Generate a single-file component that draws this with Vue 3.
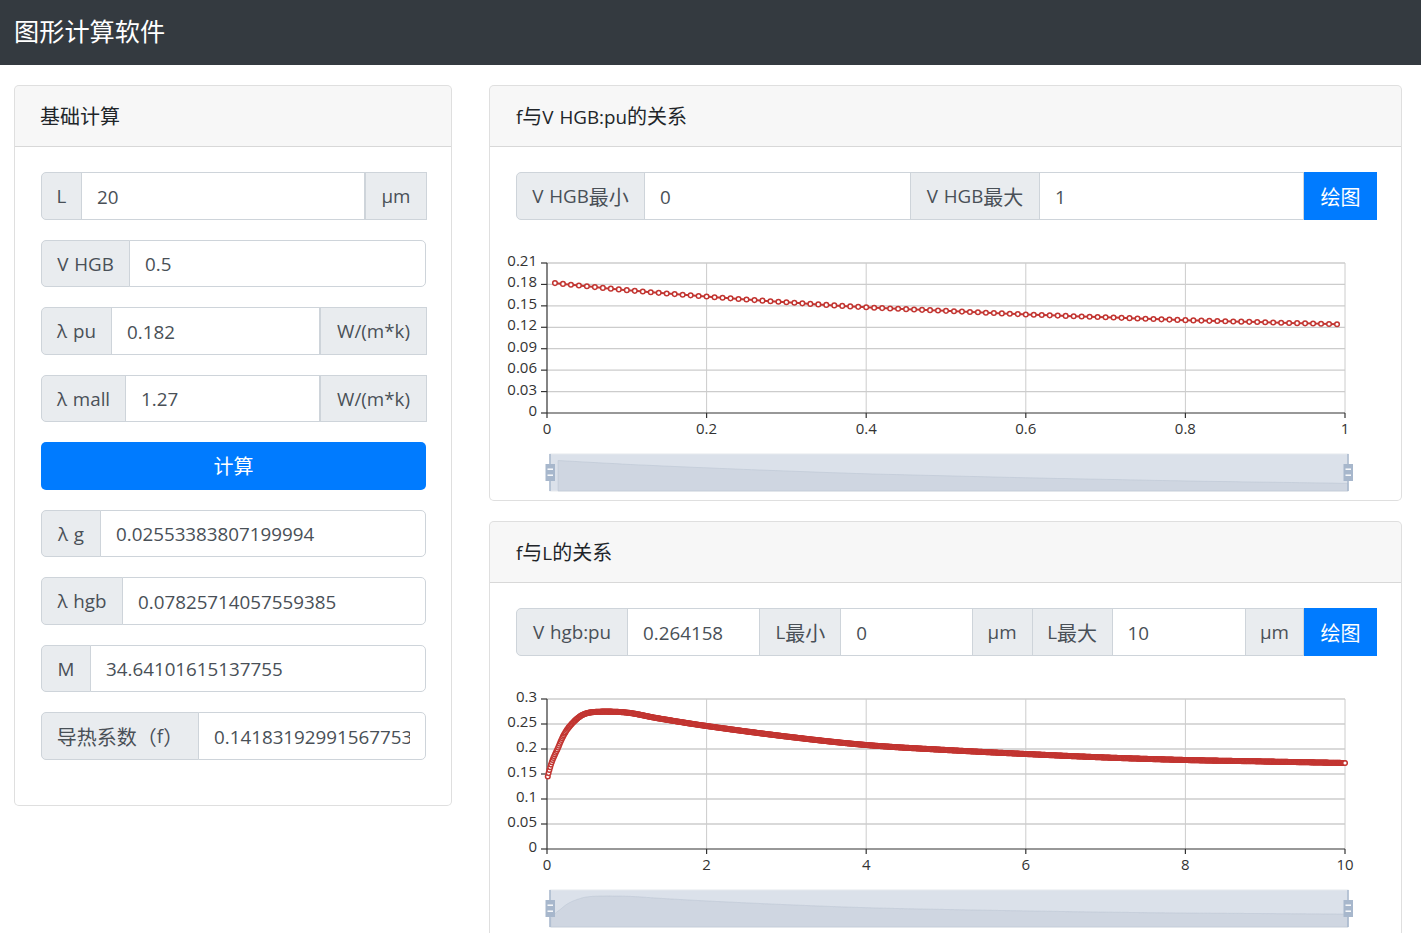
<script setup>
const segs = (t) => t.match(/[\u3000-\u9fff\uff00-\uffef]+|[^\u3000-\u9fff\uff00-\uffef]+/g).map((s) => ({ s, cjk: /[\u3000-\u9fff\uff00-\uffef]/.test(s) }))

const leftRows = [
  { label: 'L', w: 41, value: '20', append: 'µm', aw: 63 },
  { label: 'V HGB', w: 89, value: '0.5' },
  { label: 'λ pu', w: 71, value: '0.182', append: 'W/(m*k)', aw: 108 },
  { label: 'λ mall', w: 85, value: '1.27', append: 'W/(m*k)', aw: 108 },
  { button: '计算' },
  { label: 'λ g', w: 60, value: '0.02553383807199994' },
  { label: 'λ hgb', w: 82, value: '0.07825714057559385' },
  { label: 'M', w: 50, value: '34.64101615137755' },
  { label: '导热系数（f）', w: 158, value: '0.14183192991567753' }
]

const group1 = [
  { label: 'V HGB最小', w: 129 },
  { value: '0', w: 267 },
  { label: 'V HGB最大', w: 130 },
  { value: '1' }
]
const group2 = [
  { label: 'V hgb:pu', w: 112 },
  { value: '0.264158', w: 133.3 },
  { label: 'L最小', w: 82 },
  { value: '0', w: 132.3 },
  { label: 'µm', w: 61 },
  { label: 'L最大', w: 81 },
  { value: '10' },
  { label: 'µm', w: 59 }
]

const interp = (tbl, x) => {
  const n = tbl.length
  const slope = (i) => {
    const a = tbl[Math.max(i - 1, 0)]
    const b = tbl[Math.min(i + 1, n - 1)]
    return (b[1] - a[1]) / (b[0] - a[0])
  }
  for (let i = 1; i < n; i++) {
    if (x <= tbl[i][0]) {
      const h = tbl[i][0] - tbl[i - 1][0]
      const t = (x - tbl[i - 1][0]) / h
      const t2 = t * t
      const t3 = t2 * t
      return (2 * t3 - 3 * t2 + 1) * tbl[i - 1][1] + (t3 - 2 * t2 + t) * h * slope(i - 1) + (-2 * t3 + 3 * t2) * tbl[i][1] + (t3 - t2) * h * slope(i)
    }
  }
  return tbl[n - 1][1]
}

const t1 = [[0, 0.183], [0.1, 0.172], [0.2, 0.163], [0.3, 0.155], [0.4, 0.148], [0.5, 0.143], [0.6, 0.138], [0.7, 0.134], [0.8, 0.13], [0.9, 0.127], [1, 0.124]]
const t2 = [[0, 0.138], [0.03, 0.158], [0.07, 0.178], [0.135, 0.201], [0.2, 0.2247], [0.28, 0.2447], [0.41, 0.2647], [0.53, 0.2727], [0.79, 0.2747], [1.04, 0.272], [1.37, 0.262], [2, 0.246], [3.05, 0.224], [4, 0.208], [5, 0.198], [6, 0.19], [7, 0.183], [8, 0.178], [9, 0.175], [10, 0.172]]

const X0 = 57, X1 = 855, Y0 = 173, Y1 = 23
const ZL = 60, ZR = 858, ZT = 214, ZB = 251

const build = (tbl, xMax, yMax, yLabels, xLabels, step, first, last, sy) => {
  const pts = []
  const n = Math.round((last - first) / step)
  for (let i = 0; i <= n; i++) {
    const v = first + i * step
    const y = interp(tbl, v)
    pts.push({ x: X0 + (v / xMax) * (X1 - X0), y: Y0 - (y / yMax) * (Y0 - Y1), zx: ZL + ((i + 1) / (n + 1)) * (ZR - ZL), zy: sy(y) })
  }
  return {
    pts,
    line: 'M' + pts.map((p) => p.x.toFixed(2) + ' ' + p.y.toFixed(2)).join('L'),
    shadow: 'M' + pts[0].zx.toFixed(1) + ' ' + ZB + 'L' + pts.map((p) => p.zx.toFixed(1) + ' ' + p.zy.toFixed(1)).join('L') + 'L' + pts[pts.length - 1].zx.toFixed(1) + ' ' + ZB + 'Z',
    yTicks: yLabels.map((l, i) => ({ l, y: Y0 - (i / (yLabels.length - 1)) * (Y0 - Y1) })),
    xTicks: xLabels.map((l, i) => ({ l, x: X0 + (i / (xLabels.length - 1)) * (X1 - X0) }))
  }
}

const chart1 = build(t1, 1, 0.21, ['0', '0.03', '0.06', '0.09', '0.12', '0.15', '0.18', '0.21'], ['0', '0.2', '0.4', '0.6', '0.8', '1'], 0.01, 0.01, 0.99, (v) => 220.5 + ((0.182 - v) / 0.058) * 23)
const chart2 = build(t2, 10, 0.3, ['0', '0.05', '0.1', '0.15', '0.2', '0.25', '0.3'], ['0', '2', '4', '6', '8', '10'], 0.01, 0.01, 10, (v) => 220 + (0.275 - v) * 176)

const charts = [
  { title: 'f与V HGB:pu的关系', fields: group1, chart: chart1 },
  { title: 'f与L的关系', fields: group2, chart: chart2 }
]
</script>

<template>
  <div class="page">
    <header class="navbar">图形计算软件</header>
    <main class="layout">
      <section class="card">
        <div class="card-header"><span class="cjk">基础计算</span></div>
        <div class="card-body left-body">
          <template v-for="(row, i) in leftRows" :key="i">
            <button v-if="row.button" class="btn btn-full"><span class="cjk">{{ row.button }}</span></button>
            <div v-else class="input-group" :class="{ 'has-append': row.append }">
              <span class="addon" :style="{ width: row.w + 'px' }">
                <span v-for="(p, j) in segs(row.label)" :key="j" :class="{ cjk: p.cjk }">{{ p.s }}</span>
              </span>
              <input class="field" :value="row.value" />
              <span v-if="row.append" class="addon" :style="{ width: row.aw + 'px' }">{{ row.append }}</span>
            </div>
          </template>
        </div>
      </section>

      <div class="right">
        <section v-for="(c, k) in charts" :key="k" class="card">
          <div class="card-header">
            <span v-for="(p, j) in segs(c.title)" :key="j" :class="{ cjk: p.cjk }">{{ p.s }}</span>
          </div>
          <div class="card-body chart-body">
            <div class="input-group tall">
              <template v-for="(f, j) in c.fields" :key="j">
                <span v-if="f.label" class="addon" :style="{ width: f.w + 'px' }">
                  <span v-for="(p, m) in segs(f.label)" :key="m" :class="{ cjk: p.cjk }">{{ p.s }}</span>
                </span>
                <input v-else class="field" :style="f.w ? { flex: 'none', width: f.w + 'px' } : null" :value="f.value" />
              </template>
              <button class="btn btn-draw"><span class="cjk">绘图</span></button>
            </div>
          </div>
          <svg class="chart" viewBox="0 0 911 260" width="911" height="260">
            <g stroke="#ccc" stroke-width="1.3" fill="none">
              <line v-for="t in c.chart.yTicks.slice(1)" :key="t.l" :x1="X0" :x2="X1" :y1="t.y" :y2="t.y" />
            </g>
            <g stroke="#ccc" stroke-width="1" fill="none">
              <line v-for="t in c.chart.xTicks.slice(1)" :key="t.l" :x1="t.x" :x2="t.x" :y1="Y1" :y2="Y0" />
            </g>
            <g stroke="#333" stroke-width="1.2" fill="none">
              <line :x1="X0" :x2="X0" :y1="Y1" :y2="Y0" />
              <line :x1="X0" :x2="X1" :y1="Y0" :y2="Y0" />
              <line v-for="t in c.chart.yTicks" :key="t.l" :x1="X0 - 6" :x2="X0" :y1="t.y" :y2="t.y" />
              <line v-for="t in c.chart.xTicks" :key="t.l" :x1="t.x" :x2="t.x" :y1="Y0" :y2="Y0 + 5" />
            </g>
            <g class="axis-text">
              <text v-for="t in c.chart.yTicks" :key="t.l" x="47" :y="t.y + 3" text-anchor="end">{{ t.l }}</text>
              <text v-for="t in c.chart.xTicks" :key="t.l" :x="t.x" :y="Y0 + 20.5" text-anchor="middle">{{ t.l }}</text>
            </g>
            <path :d="c.chart.line" fill="none" stroke="#c23531" stroke-width="2" />
            <circle v-for="(p, i) in c.chart.pts" :key="i" :cx="p.x" :cy="p.y" r="2.3" fill="#fff" stroke="#c23531" stroke-width="1.5" />

            <rect :x="ZL" :y="ZT" :width="ZR - ZL" :height="ZB - ZT" fill="#dbe1ea" stroke="#e6e9ee" stroke-width="1" />
            <path :d="c.chart.shadow" fill="#cfd6e1" stroke="#bcc6d4" stroke-width="0.6" />
            <line :x1="ZL" :x2="ZL" :y1="ZT" :y2="ZB" stroke="#a7b7cc" stroke-width="1.5" />
            <line :x1="ZR" :x2="ZR" :y1="ZT" :y2="ZB" stroke="#a7b7cc" stroke-width="1.5" />
            <g v-for="hx in [ZL, ZR]" :key="hx">
              <rect :x="hx - 4.5" y="224" width="9.5" height="17" fill="#a7b7cc" />
              <rect :x="hx - 2.5" y="228.5" width="5.5" height="1.4" fill="#fff" />
              <rect :x="hx - 2.5" y="234.5" width="5.5" height="1.4" fill="#fff" />
            </g>
          </svg>
        </section>
      </div>
    </main>
  </div>
</template>

<style>
html, body { margin: 0; overflow: hidden; height: 933px; background: #fff; }
</style>

<style scoped>
.page {
  font-family: "Open Sans", "Noto Sans CJK SC", sans-serif;
  font-size: 18.8px;
  word-spacing: 1px;
  color: #212529;
}
.cjk { font-family: "Noto Sans CJK SC", sans-serif; font-size: 20px; }
.navbar {
  height: 65px;
  box-sizing: border-box;
  background: #343a40;
  color: #fff;
  font-family: "Noto Sans CJK SC", sans-serif;
  font-size: 25.2px;
  line-height: 61px;
  padding-left: 14px;
}
.layout {
  display: grid;
  grid-template-columns: 438px 913px;
  column-gap: 37px;
  align-items: start;
  padding: 20px 0 0 14px;
}
.right { display: flex; flex-direction: column; gap: 20px; }
.right .card-header { padding-left: 26px; }
.card {
  border: 1px solid rgba(0, 0, 0, 0.125);
  border-radius: 5px;
  background: #fff;
}
.card-header {
  height: 61px;
  box-sizing: border-box;
  padding: 0 25px;
  line-height: 60px;
  background: rgba(0, 0, 0, 0.03);
  border-bottom: 1px solid rgba(0, 0, 0, 0.125);
  border-radius: 4px 4px 0 0;
  color: #212529;
}
.card-body { padding: 25px 25px 0 26px; }
.left-body { display: flex; flex-direction: column; gap: 20px; padding-bottom: 45px; }
.chart-body { padding-bottom: 20px; padding-right: 24px; }
.input-group { display: flex; height: 47.5px; color: #495057; }
.tall { height: 48px; }
.has-append { margin-right: -1px; }
.addon {
  box-sizing: border-box;
  flex: none;
  display: flex;
  align-items: center;
  justify-content: center;
  background: #e9ecef;
  border: 1px solid #ced4da;
  margin-right: -1px;
  padding-top: 1.5px;
  white-space: pre;
  line-height: 1;
  color: #495057;
}
.input-group > .addon:first-child { border-radius: 5px 0 0 5px; }
.input-group > .addon:last-child { margin-right: 0; border-left-width: 2px; }
.field {
  flex: 1;
  min-width: 0;
  box-sizing: border-box;
  height: 100%;
  border: 1px solid #ced4da;
  background: #fff;
  padding: 2px 15px 0;
  margin: 0 -1px 0 0;
  font: inherit;
  color: #495057;
  outline: none;
  border-radius: 0;
}
.input-group > .field:last-child { border-radius: 0 5px 5px 0; margin-right: 0; }
.btn {
  border: none;
  background: #007bff;
  color: #fff;
  font: inherit;
  padding: 0;
}
.btn-full { height: 47.5px; border-radius: 5px; }
.btn-draw { width: 73px; flex: none; height: 48px; margin-left: 1px; }
.chart { display: block; }
.axis-text { font-family: "Open Sans", sans-serif; font-size: 15px; fill: #333; word-spacing: 0; }
</style>
